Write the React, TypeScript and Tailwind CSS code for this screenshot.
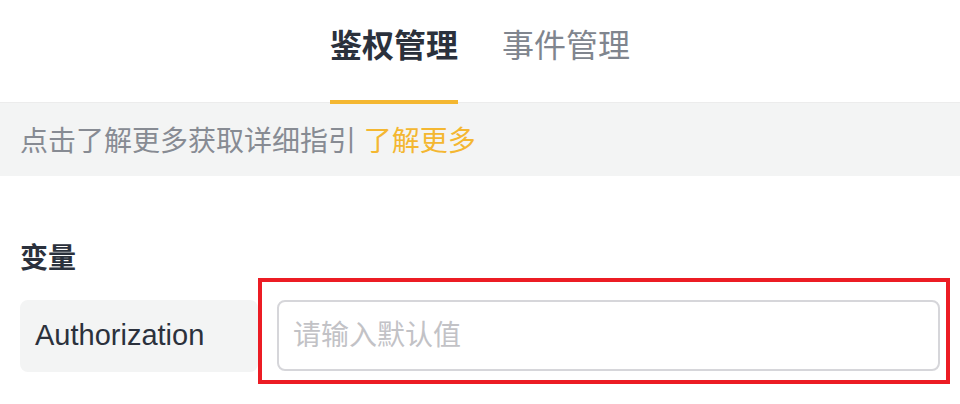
const sans = "font-['Liberation_Sans','Noto_Sans_CJK_SC',sans-serif]";

const tabs = [
  { label: "鉴权管理", active: true },
  { label: "事件管理", active: false },
];

export default function App() {
  return (
    <div className={`w-[960px] h-[404px] bg-white overflow-hidden ${sans}`}>
      {/* TABS */}
      <div className="h-[102px] flex justify-center gap-[44px] pt-[30px]">
        {tabs.map((tab) => (
          <div key={tab.label} className="relative h-[72px]">
            <span
              className={`block text-[32px] leading-[32px] ${
                tab.active ? "font-bold text-[#2b313c]" : "text-[#80858e]"
              }`}
            >
              {tab.label}
            </span>
            {tab.active && (
              <div className="absolute left-0 right-0 -bottom-[2px] h-[4px] bg-[#f4b731] z-10" />
            )}
          </div>
        ))}
      </div>

      {/* TIP */}
      <div className="h-[74px] bg-[#f3f4f4] border-t border-[#ececec] pl-[20px] pt-[25px] text-[28px] leading-[28px] text-[#878b93]">
        点击了解更多获取详细指引 <span className="text-[#f4b731]">了解更多</span>
      </div>

      {/* VARIABLES */}
      <div className="px-[20px] pt-[69px]">
        <div className="text-[28px] leading-[28px] font-bold text-[#2b313c]">变量</div>
        <div className="flex mt-[27px] h-[72px]">
          <div className="w-[238px] h-[72px] rounded-[8px] bg-[#f3f4f4] flex items-center pl-[15px] text-[29px] text-[#2b313c]">
            Authorization
          </div>
          <div className="relative flex-1 ml-[19px] h-[71px]">
            <input
              placeholder="请输入默认值"
              className={`w-full h-full rounded-[8px] border-2 border-[#d6d6da] pl-[14px] text-[28px] outline-none placeholder:text-[#c2c2c6] ${sans}`}
            />
            <div className="absolute -left-[19px] -top-[22px] -right-[10px] -bottom-[13px] border-[4px] border-[#ec1c24] pointer-events-none" />
          </div>
        </div>
      </div>
    </div>
  );
}
